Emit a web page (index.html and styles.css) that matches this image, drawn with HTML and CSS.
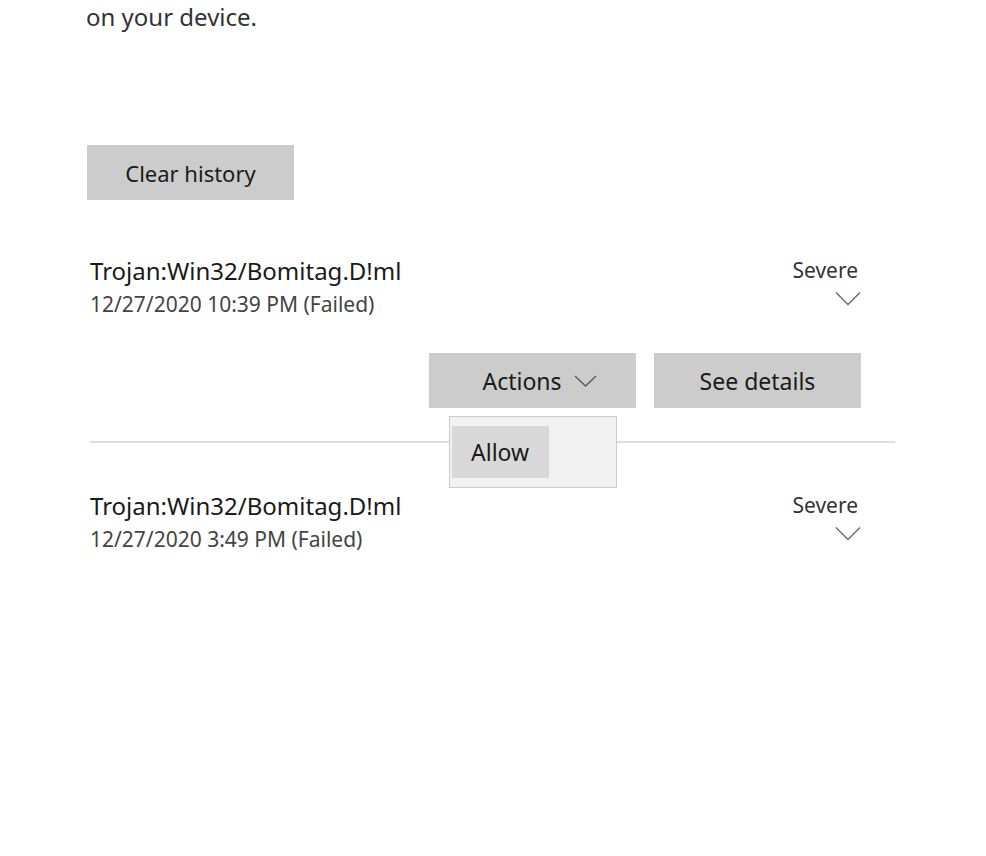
FILE: index.html
```html
<!DOCTYPE html>
<html lang="en">
<head>
  <meta charset="UTF-8" />
  <title>Protection history</title>
  <link rel="stylesheet" href="styles.css">
</head>
<body>
  <div class="page">
    <p class="intro">on your device.</p>

    <button class="btn btn-clear">Clear history</button>

    <div class="history">
      <div class="threat">
        <div class="threat-head">
          <div>
            <div class="threat-name">Trojan:Win32/Bomitag.D!ml</div>
            <div class="threat-date">12/27/2020 10:39 PM (Failed)</div>
          </div>
          <div class="threat-level">
            <span>Severe</span>
            <svg class="chevron" width="26" height="16" viewBox="0 0 26 16"><path d="M1 1.5 L13 13.5 L25 1.5" fill="none" stroke="#6b6b6b" stroke-width="1.4"/></svg>
          </div>
        </div>
        <div class="threat-actions">
          <div class="dropdown">
            <button class="btn btn-actions">Actions
              <svg width="23" height="14" viewBox="0 0 23 14"><path d="M1 2 L11.5 12 L22 2" fill="none" stroke="#555" stroke-width="1.3"/></svg>
            </button>
            <div class="menu">
              <div class="menu-item">Allow</div>
            </div>
          </div>
          <button class="btn">See details</button>
        </div>
      </div>

      <div class="threat">
        <div class="threat-head">
          <div>
            <div class="threat-name">Trojan:Win32/Bomitag.D!ml</div>
            <div class="threat-date">12/27/2020 3:49 PM (Failed)</div>
          </div>
          <div class="threat-level">
            <span>Severe</span>
            <svg class="chevron" width="26" height="16" viewBox="0 0 26 16"><path d="M1 1.5 L13 13.5 L25 1.5" fill="none" stroke="#6b6b6b" stroke-width="1.4"/></svg>
          </div>
        </div>
      </div>
    </div>
  </div>
</body>
</html>
```

FILE: styles.css
```css
body {
  margin: 0;
  background: #fff;
  font-family: 'Noto Sans', 'Open Sans', sans-serif;
  color: #1f1f1f;
}
.page {
  padding-left: 86px;
}
.intro {
  margin: 0;
  font-size: 24px;
  line-height: 33px;
  color: #333;
}
.btn {
  display: inline-flex;
  align-items: center;
  justify-content: center;
  gap: 12px;
  width: 207px;
  height: 55px;
  border: none;
  background: #cccccc;
  font-family: inherit;
  font-size: 23px;
  color: #1a1a1a;
  cursor: pointer;
}
.btn-clear {
  margin: 112px 0 0 1px;
  font-size: 22px;
}
.btn-actions {
  padding-left: 20px;
}
.history {
  width: 805px;
  margin: 55px 0 0 4px;
}
.threat {
  padding-right: 34px;
}
.threat + .threat {
  border-top: 2px solid #dedede;
  padding-top: 47px;
}
.threat-head {
  display: flex;
  justify-content: space-between;
}
.threat-name {
  font-size: 24px;
  line-height: 32px;
  color: #1a1a1a;
}
.threat-date {
  font-size: 21px;
  line-height: 35px;
  color: #444;
}
.threat-level {
  display: flex;
  flex-direction: column;
  align-items: flex-end;
  font-size: 21px;
  line-height: 30px;
  color: #333;
}
.threat-level span {
  padding-right: 3px;
}
.chevron {
  margin-top: 6px;
}
.threat-actions {
  display: flex;
  justify-content: flex-end;
  gap: 18px;
  margin-top: 31px;
  padding-bottom: 33px;
}
.dropdown {
  position: relative;
}
.menu {
  position: absolute;
  left: 20px;
  top: 63px;
  width: 166px;
  height: 70px;
  background: #f2f2f2;
  border: 1px solid #cccccc;
  z-index: 2;
}
.menu-item {
  margin: 9px 0 0 2px;
  width: 97px;
  height: 52px;
  line-height: 52px;
  padding-left: 19px;
  box-sizing: border-box;
  background: #d9d9d9;
  font-size: 23px;
  color: #1a1a1a;
}
```
